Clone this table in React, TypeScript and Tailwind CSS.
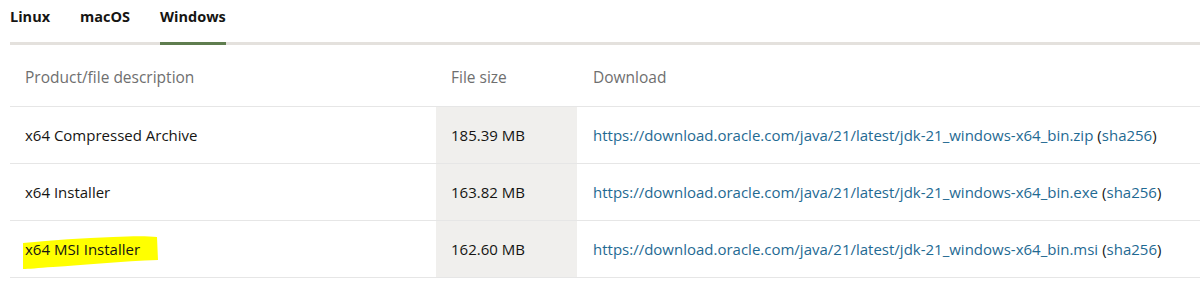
const rows = [
  { name: "x64 Compressed Archive", size: "185.39 MB", url: "https://download.oracle.com/java/21/latest/jdk-21_windows-x64_bin.zip" },
  { name: "x64 Installer", size: "163.82 MB", url: "https://download.oracle.com/java/21/latest/jdk-21_windows-x64_bin.exe" },
  { name: "x64 MSI Installer", size: "162.60 MB", url: "https://download.oracle.com/java/21/latest/jdk-21_windows-x64_bin.msi", marked: true },
];

// marker stroke behind the highlighted row label
function Highlight({ children }: { children: React.ReactNode }) {
  return (
    <span className="relative inline-block">
      <svg className="absolute -left-[2px] -top-[2px] w-[135px] h-[34px]" viewBox="0 0 135 34" preserveAspectRatio="none">
        <path d="M0 7 C30 4 60 2 90 1 C110 0 125 0 134 1 L135 24 C100 25 60 29 30 31 C15 32 5 33 0 33 Z" fill="#ffff00" />
      </svg>
      <span className="relative">{children}</span>
    </span>
  );
}

export default function App() {
  return (
    <div className="bg-white w-[1200px] h-[292px] pl-[10px] text-[#161513]" style={{ fontFamily: '"Open Sans", sans-serif' }}>
      <div className="flex gap-[30px] border-b-[3px] border-[#e4e1dd] h-[45px]">
        {["Linux", "macOS", "Windows"].map((t) => (
          <div
            key={t}
            className={
              "pt-[6px] text-[14.5px] font-bold h-[45px] " +
              (t === "Windows" ? "border-b-[3px] border-[#5f7d4f]" : "")
            }
          >
            {t}
          </div>
        ))}
      </div>

      <div className="grid grid-cols-[426px_141px_1fr] text-[15px]">
        <div className="h-[62px] flex items-center pl-[15px] pt-[4px] text-[15.5px] text-[#6f6f6f] border-b border-[#e6e6e6]">Product/file description</div>
        <div className="h-[62px] flex items-center pl-[15px] pt-[4px] text-[15.5px] text-[#6f6f6f] border-b border-[#e6e6e6]">File size</div>
        <div className="h-[62px] flex items-center pl-[16px] pt-[4px] text-[15.5px] text-[#6f6f6f] border-b border-[#e6e6e6]">Download</div>
        {rows.map((r) => (
          <div key={r.name} className="contents">
            <div className="h-[57px] flex items-center pl-[15px] border-b border-[#e6e6e6]">
              {r.marked ? <Highlight>{r.name}</Highlight> : r.name}
            </div>
            <div className="h-[57px] flex items-center pl-[15px] bg-[#f0efed] border-b border-[#e6e6e6]">{r.size}</div>
            <div className="h-[57px] flex items-center pl-[16px] border-b border-[#e6e6e6]">
              <a className="text-[#1f6a93]">{r.url}</a>
              <span className="ml-[4px]">(</span>
              <a className="text-[#1f6a93]">sha256</a>
              <span>)</span>
            </div>
          </div>
        ))}
      </div>
    </div>
  );
}
